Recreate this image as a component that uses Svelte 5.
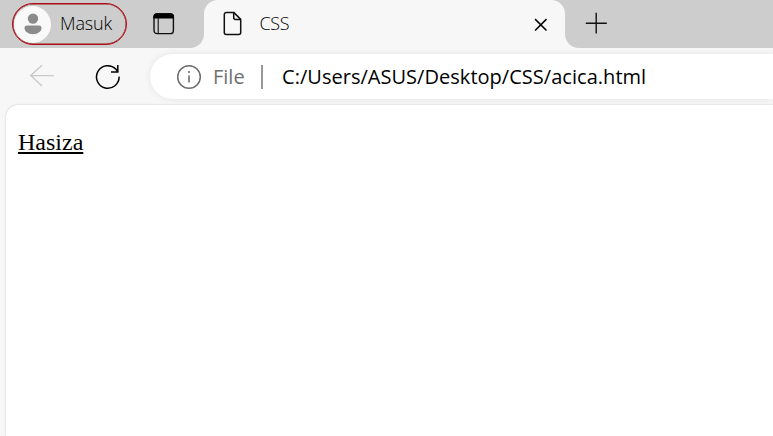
<script>
  const profile = 'Masuk';
  const title = 'CSS';
  const url = 'C:/Users/ASUS/Desktop/CSS/acica.html';
</script>

<div class="window">
  <header class="tabs">
    <div class="left">
      <button class="profile">
        <span class="avatar">
          <svg width="18" height="22" viewBox="0 0 18 22" fill="#8b8b8b"><circle cx="9" cy="5.6" r="5.2" /><path d="M3 12.6h12a2.5 2.5 0 0 1 2.5 2.5c0 3.5-3.5 6.1-8.5 6.1S.5 18.6.5 15.1A2.5 2.5 0 0 1 3 12.6z" /></svg>
        </span>
        <span class="name">{profile}</span>
      </button>
      <svg class="workspace" width="22" height="22" viewBox="0 0 22 22"><rect x="1" y="1" width="19.4" height="19.6" rx="3.2" fill="none" stroke="#111" stroke-width="1.4" /><path d="M.3 5.6V4A3.7 3.7 0 0 1 4 .2h13.4A3.7 3.7 0 0 1 21.1 4v1.6z" fill="#000" /><path d="M5.2 5v15.5" stroke="#111" stroke-width="1.1" /></svg>
    </div>
    <div class="slot">
      <div class="tab">
        <svg width="20" height="26" viewBox="0 0 20 26" fill="none" stroke="#111" stroke-width="1.5" stroke-linejoin="round"><path d="M3.3 1.4h7.4l7 7v13a2 2 0 0 1-2 2H3.3a2 2 0 0 1-2-2v-18a2 2 0 0 1 2-2z" /><path d="M10.7 1.4v5a2 2 0 0 0 2 2h5" /></svg>
        <span class="title">{title}</span>
        <svg class="close" width="14" height="14" viewBox="0 0 14 14" stroke="#000" stroke-width="1.5"><path d="M1.1 1.1l11.4 11.4M12.5 1.1L1.1 12.5" /></svg>
      </div>
    </div>
    <div class="right">
      <svg width="22" height="22" viewBox="0 0 22 22" stroke="#111" stroke-width="1.4"><path d="M11.2 .8v20.6M.8 11.2h21" /></svg>
    </div>
  </header>
  <nav class="toolbar">
    <svg class="back" width="26" height="24" viewBox="0 0 26 24" fill="none" stroke="#c9c9c9" stroke-width="1.4"><path d="M25 11.6H1.7M13 1.2L1.7 11.6 13 22" /></svg>
    <svg class="reload" width="26" height="26" viewBox="0 0 26 26" fill="none" stroke="#000" stroke-width="1.5"><path d="M24.1 12.6A11.3 11.3 0 1 1 20.8 5l2 2.7" /><path d="M22.8 1v6.9H16" /></svg>
    <div class="address">
      <svg class="info" width="26" height="26" viewBox="0 0 26 26" fill="none" stroke="#6d6d6d"><circle cx="13" cy="13" r="11.3" stroke-width="1.5" /><path d="M13 11.4v7.2" stroke-width="1.6" /><circle cx="13" cy="8" r="1.1" fill="#6d6d6d" stroke="none" /></svg>
      <span class="scheme">File</span>
      <i class="divider"></i>
      <span class="url">{url}</span>
    </div>
  </nav>
  <main><u>Hasiza</u></main>
</div>

<style>
  :global(body) { margin: 0; }
  * { box-sizing: border-box; }
  svg { display: block; flex: none; }
  .window { width: 773px; height: 436px; overflow: hidden; display: flex; flex-direction: column; background: #f7f7f7; font-family: "Open Sans", "Noto Sans", sans-serif; color: #000; }
  .tabs { height: 48px; display: flex; flex: none; }
  .left { width: 204px; background: #cdcdcd; border-bottom-right-radius: 14px; padding: 3px 0 0 12px; display: flex; }
  .profile { width: 115px; height: 42px; padding: 0 0 0 1px; border: 1px solid #a80f17; box-shadow: inset 0 0 0 .5px #a80f17; border-radius: 21px; background: none; display: flex; align-items: center; font-family: inherit; color: #000; }
  .avatar { width: 37px; height: 37px; border-radius: 50%; background: #f9f9f9; display: flex; align-items: center; justify-content: center; }
  .name { margin: 0 0 2px 9px; font-size: 18px; font-weight: 330; line-height: 24px; letter-spacing: -.15px; }
  .workspace { margin: 10px 0 0 26px; }
  .slot { width: 361px; background: #cdcdcd; }
  .tab { height: 48px; border-radius: 14px 14px 0 0; background: #f7f7f7; display: flex; align-items: center; padding-left: 19px; }
  .title { flex: 1; margin: 0 0 2px 16.5px; font-size: 18px; font-weight: 330; line-height: 24px; letter-spacing: -.4px; }
  .close { margin: 2px 17px 0 0; }
  .right { flex: 1; background: #cdcdcd; border-bottom-left-radius: 14px; padding: 12px 0 0 20px; }
  .toolbar { height: 57px; flex: none; display: flex; padding-top: 6px; }
  .back { margin: 10px 0 0 29px; }
  .reload { margin: 10px 0 0 40px; }
  .address { flex: 1; margin-left: 29px; height: 45px; border-radius: 23px 0 0 23px; background: #fff; box-shadow: 0 0 6px rgba(0, 0, 0, .09); display: flex; align-items: center; padding-left: 26px; font-size: 20px; line-height: 28px; white-space: nowrap; }
  .scheme { width: 48px; margin-left: 11px; color: #707070; }
  .divider { width: 2px; height: 24px; background: #999; }
  .url { margin-left: 19px; letter-spacing: .03px; }
  main { flex: 1; margin-left: 6px; background: #fff; border-top-left-radius: 12px; box-shadow: 0 0 2px rgba(0, 0, 0, .22); padding: 23px 12px; font: 24px/28px "Liberation Serif", "Times New Roman", serif; }
  u { text-decoration-thickness: 2px; text-underline-offset: 2px; text-decoration-skip-ink: none; }
</style>
